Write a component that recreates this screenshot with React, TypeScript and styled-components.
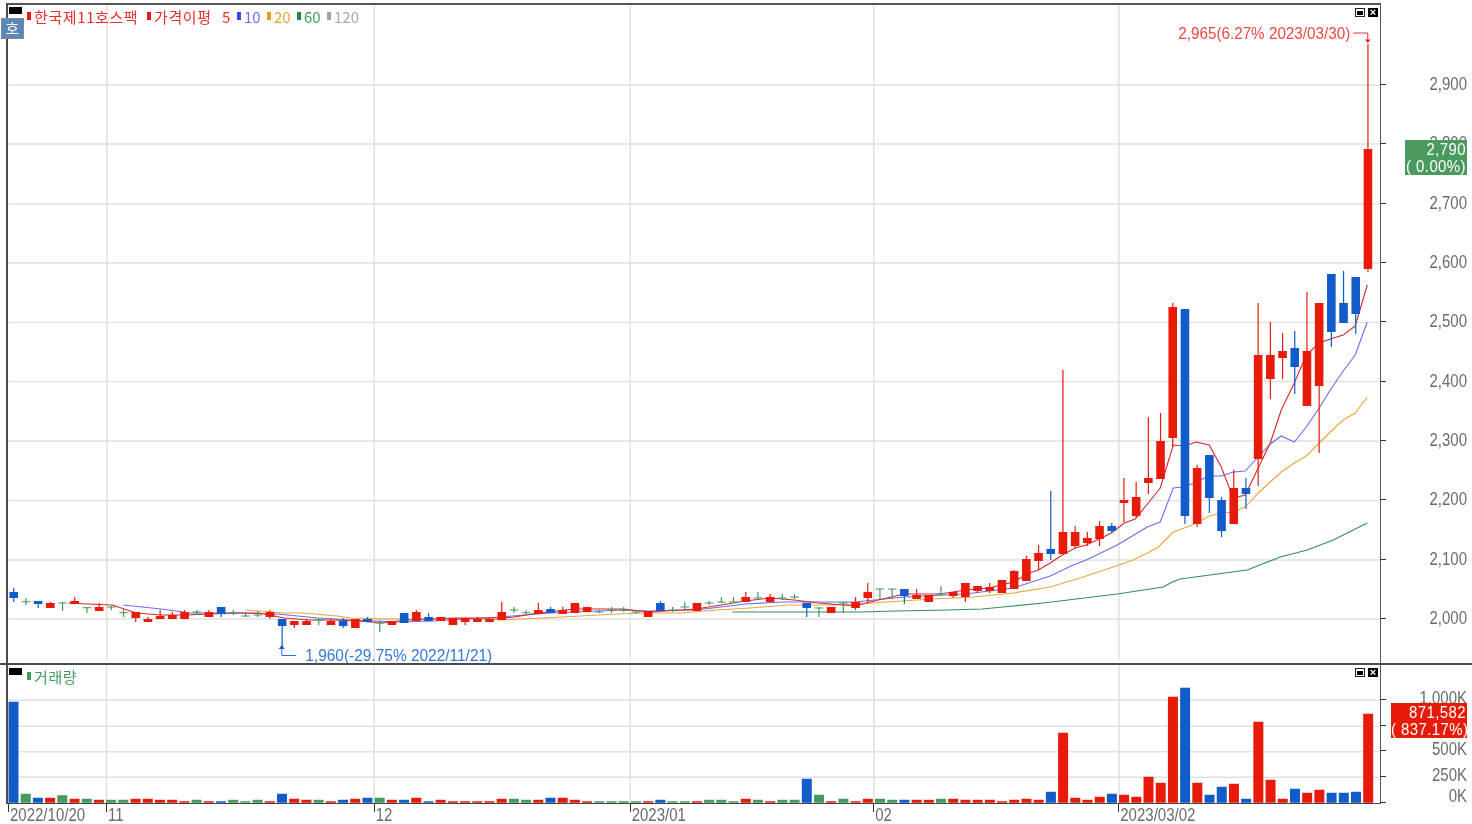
import styled, { createGlobalStyle } from "styled-components";

type Candle = ["r" | "b" | "g", number, number, number, number];
type Bar = ["r" | "b" | "g", number];

const RED = "#e81b0a";
const BLUE = "#115cca";
const GREEN = "#459a5d";
const colors = { r: RED, b: BLUE, g: GREEN };

const X0 = 13.5;
const STEP = 12.2;
const slotX = (i: number) => X0 + STEP * i;

// [colour, wick top, body top, body bottom, wick bottom] in page pixels
const candles: Candle[] = [
    ["b", 588, 592, 598, 602], ["g", 598, 601.7, 601.7, 605], ["b", 601, 601, 604, 608], ["r", 602, 603, 608, 608],
    ["g", 602, 603, 603, 611], ["r", 597, 601, 604, 604], ["g", 607, 607.7, 607.7, 613], ["r", 603, 607, 611, 611],
    ["g", 606, 607, 607, 610], ["g", 609, 612.7, 612.7, 617], ["r", 612, 612, 618, 622], ["r", 617, 619, 622, 622],
    ["r", 610, 616, 619, 619], ["r", 612, 615, 619, 619], ["r", 610, 612, 619, 619], ["g", 610, 612, 612, 615],
    ["r", 610, 612, 617, 617], ["b", 607, 607, 614, 617], ["g", 610, 612.7, 612.7, 615], ["g", 612, 616, 616, 617],
    ["g", 611, 615, 615, 617], ["r", 610, 612, 617, 619], ["b", 619, 619, 626, 646], ["r", 621, 621, 625, 628],
    ["r", 619, 621, 625, 625], ["g", 618, 620, 620, 625], ["r", 619, 621, 625, 625], ["b", 618, 621, 626, 628],
    ["r", 619, 619, 628, 628], ["b", 617, 619, 622, 622], ["g", 620, 623, 623, 632], ["r", 621, 621, 625, 625],
    ["b", 613, 613, 623, 623], ["r", 610, 612, 621, 621], ["b", 613, 617, 621, 621], ["r", 617, 617, 621, 621],
    ["r", 618, 618, 625, 625], ["r", 618, 618, 622, 625], ["r", 617, 619, 622, 622], ["r", 618, 619, 622, 622],
    ["r", 602, 612, 620, 620], ["g", 607, 610, 610, 613], ["g", 610, 612.7, 612.7, 615], ["r", 603, 610, 614, 614],
    ["b", 607, 609, 613, 613], ["r", 607, 610, 614, 614], ["r", 603, 603, 613, 613], ["r", 607, 607, 612, 612],
    ["g", 610, 612, 612, 613], ["g", 607, 610, 610, 613], ["g", 607, 610, 610, 612], ["g", 610, 612, 612, 614],
    ["r", 611, 611, 617, 617], ["b", 601, 603, 611, 611], ["g", 607, 610, 610, 612], ["g", 602, 607, 607, 610],
    ["r", 603, 603, 611, 611], ["g", 601, 603, 603, 605], ["g", 597, 602, 602, 603], ["g", 597, 602, 602, 603],
    ["r", 592, 597, 602, 602], ["g", 592, 598, 598, 600], ["r", 594, 597, 602, 603], ["g", 594, 598, 598, 600],
    ["g", 594, 597, 597, 599], ["b", 603, 603, 608, 617], ["g", 607, 608, 608, 617], ["r", 607, 607, 613, 613],
    ["g", 602, 603, 603, 613], ["r", 597, 602, 608, 610], ["r", 583, 592, 598, 603], ["g", 589, 589, 589, 600],
    ["g", 589, 589, 589, 599], ["b", 589, 589, 596, 604], ["r", 589, 595, 599, 599], ["r", 595, 595, 602, 602],
    ["g", 586, 594, 594, 596], ["r", 592, 592, 596, 598], ["r", 583, 583, 597, 602], ["r", 586, 586, 591, 593],
    ["r", 583, 587, 591, 593], ["r", 580, 580, 593, 593], ["r", 570, 571, 589, 589], ["r", 556, 559, 581, 581],
    ["r", 545, 553, 561, 570], ["b", 491, 549, 554, 560], ["r", 370, 532, 554, 554], ["r", 526, 532, 546, 548],
    ["r", 532, 538, 543, 546], ["r", 521, 526, 539, 546], ["b", 523, 526, 531, 533], ["r", 478, 500, 503, 522],
    ["r", 482, 497, 516, 518], ["r", 417, 478, 483, 494], ["r", 413, 441, 479, 479], ["r", 303, 307, 438, 447],
    ["b", 309, 309, 516, 524], ["r", 465, 468, 524, 527], ["b", 455, 455, 498, 513], ["b", 497, 500, 531, 537],
    ["r", 470, 488, 524, 524], ["b", 478, 488, 494, 509], ["r", 303, 355, 459, 486], ["r", 322, 355, 379, 399],
    ["r", 333, 351, 358, 379], ["b", 331, 348, 367, 394], ["r", 292, 351, 406, 406], ["r", 303, 303, 386, 453],
    ["b", 274, 274, 332, 347], ["b", 271, 303, 323, 323], ["b", 277, 277, 314, 334], ["r", 44, 149, 269, 272],
];

const volumes: Bar[] = [
    ["b", 101], ["g", 9], ["b", 5], ["r", 5], ["g", 7.5], ["r", 4], ["g", 4], ["r", 3], ["g", 3], ["g", 3],
    ["r", 4], ["r", 4], ["r", 3], ["r", 3], ["r", 1.5], ["g", 3], ["r", 1.5], ["b", 1.5], ["g", 3], ["g", 1.5],
    ["g", 3], ["r", 1.5], ["b", 9], ["r", 4], ["r", 3], ["g", 3], ["r", 1.5], ["b", 3], ["r", 4], ["b", 5],
    ["g", 5], ["r", 3], ["b", 3], ["r", 5], ["b", 1.5], ["r", 3], ["r", 1.5], ["r", 1.5], ["r", 1.5], ["r", 1.5],
    ["r", 4], ["g", 4], ["g", 3], ["r", 3], ["b", 5], ["r", 5], ["r", 3], ["r", 1.5], ["g", 1.5], ["g", 1.5],
    ["g", 1.5], ["g", 1.5], ["r", 1.5], ["b", 3], ["g", 1.5], ["g", 1.5], ["r", 1.5], ["g", 3], ["g", 3], ["g", 1.5],
    ["r", 4], ["g", 3], ["r", 1.5], ["g", 3], ["g", 3], ["b", 24], ["g", 8], ["r", 1.5], ["g", 4], ["r", 1.5],
    ["r", 4], ["g", 4], ["g", 3], ["b", 3], ["r", 3], ["r", 3], ["g", 4], ["r", 4], ["r", 3], ["r", 3],
    ["r", 3], ["r", 1.5], ["r", 3], ["r", 4], ["r", 3], ["b", 11], ["r", 70], ["r", 5], ["r", 3], ["r", 6],
    ["b", 9], ["r", 8], ["r", 6], ["r", 26], ["r", 20], ["r", 106], ["b", 115], ["r", 20], ["b", 8], ["b", 16],
    ["r", 19], ["b", 4], ["r", 81], ["r", 23], ["r", 4], ["b", 14], ["r", 10], ["r", 13], ["b", 10], ["b", 10],
    ["b", 11], ["r", 89],
];

const ma5 = "68,603 87,604 112,605 136,613 161,615 185,615 210,614 235,613 259,613 284,618 309,620 333,620 358,621 382,623 406,620 456,618 502,618 514,617 538,613 574,609 623,609 648,612 696,609 721,605 745,601 770,598 794,600 818,603 855,606 878,600 904,594 940,594 965,590 989,588 1013,582 1029,573 1038,570 1050,563 1062,555 1075,548 1086,545 1099,539 1111,533 1124,523 1135,519 1148,503 1160,488 1173,445 1184,446 1196,442 1209,445 1221,467 1233,498 1245,495 1257,470 1270,443 1281,410 1294,383 1306,355 1319,343 1330,339 1343,335 1355,326 1367,285";
const ma10 = "123,605 161,609 190,613 233,613 277,614 318,618 350,620 400,622 433,621 500,617 550,613 574,612 623,610 648,611 696,610 745,604 782,602 855,602 904,597 965,594 1013,588 1050,576 1073,565 1086,560 1117,545 1147,527 1160,522 1173,488 1184,487 1196,482 1209,476 1221,476 1233,472 1245,471 1257,458 1270,444 1281,436 1294,442 1306,427 1319,408 1330,390 1343,371 1355,355 1367,322";
const ma20 = "245,610 284,613 302,613 337,616 350,618 390,619 483,619 500,620 543,618 580,616 617,614 642,613 680,613 717,610 750,608 787,605 833,605 870,603 933,599 973,597 1013,593 1050,587 1080,578 1110,568 1133,560 1157,548 1173,532 1192,525 1196,523 1209,516 1221,513 1233,512 1245,507 1257,494 1270,482 1281,472 1294,463 1306,456 1319,443 1330,432 1343,420 1355,413 1367,397";
const ma60 = "732,612 860,612 897,611 947,610 982,609 1013,606 1043,603 1117,594 1163,587 1172,582 1180,579 1247,570 1280,557 1307,550 1333,540 1353,530 1367,523";

const gridColumns = [106.5, 374, 630, 873.5, 1118.7];
const priceRows = [85, 144, 204, 263, 322.5, 381.5, 441, 500.5, 560, 619];
const volumeRows = [700, 726, 751.5, 777];

const priceLabels = ["2,900", "2,800", "2,700", "2,600", "2,500", "2,400", "2,300", "2,200", "2,100", "2,000"];
const volumeLabels: [string, number][] = [["1,000K", 5], ["750K", 5], ["500K", 5], ["250K", 5], ["0K", 14]];
const dateTicks: [string, number][] = [["2022/10/20", 98], ["11", 267.7], ["12", 256], ["2023/01", 243.6], ["02", 245], ["2023/03/02", 200]];

const GlobalStyle = createGlobalStyle`
    html, body {
        margin: 0;
        background: #fff;
    }
`;

const Page = styled.div`
    width: 1472px;
    height: 824px;
    padding-top: 3px;
    box-sizing: border-box;
    overflow: hidden;
    background: #fff;
    font-family: "Liberation Sans", "Noto Sans CJK KR", sans-serif;
    filter: blur(0.35px);
`;

const Row = styled.div<{ $divided?: boolean; $height: number }>`
    display: flex;
    height: ${({ $height }) => $height}px;
    padding-left: 6px;
    border-top: ${({ $divided }) => ($divided ? "2px solid #4a4a4a" : "none")};
`;

const Plot = styled.div<{ $volume?: boolean }>`
    position: relative;
    flex: none;
    width: 1375px;
    box-sizing: border-box;
    height: 100%;
    border-left: 2px solid #4a4a4a;
    border-right: 1.5px solid #555;
    border-top: ${({ $volume }) => ($volume ? "none" : "2px solid #555")};
    border-bottom: ${({ $volume }) => ($volume ? "1.5px solid #444" : "none")};
`;

const Chart = styled.svg`
    display: block;
    width: 100%;
    height: 100%;
`;

const Axis = styled.div<{ $top: number }>`
    position: relative;
    flex: 1;
    padding-top: ${({ $top }) => $top}px;
    color: #6b6b6b;
    font-size: 15px;
`;

const Tick = styled.div<{ $height: number }>`
    display: flex;
    align-items: center;
    height: ${({ $height }) => $height}px;
    padding-right: 5px;

    &::before {
        content: "";
        width: 5px;
        height: 1px;
        background: #333;
    }
`;

const TickLabel = styled.span<{ $lift?: number }>`
    display: inline-block;
    margin-left: auto;
    margin-bottom: ${({ $lift }) => $lift ?? 2}px;
    transform: scaleY(1.22);
`;

const PriceTag = styled.div<{ $top: number; $left: number; $tone: string }>`
    position: absolute;
    top: ${({ $top }) => $top}px;
    left: ${({ $left }) => $left}px;
    right: 5px;
    height: 35px;
    background: ${({ $tone }) => $tone};
    color: #fff;
    font-size: 15px;
    line-height: 17px;
    text-align: right;
    padding-right: 1px;
    letter-spacing: 0.4px;
    white-space: pre;

    span {
        display: block;
        transform: scaleY(1.1);
    }
`;

const Legend = styled.div`
    position: absolute;
    top: 1px;
    left: 19px;
    display: flex;
    align-items: center;
    height: 20px;
    font-family: "Noto Sans CJK KR", "Liberation Sans", sans-serif;
    font-size: 15px;
    white-space: nowrap;
`;

const Marker = styled.i<{ $tone: string }>`
    flex: none;
    width: 4px;
    height: 8px;
    background: ${({ $tone }) => $tone};
    margin-right: 3px;
`;

const LegendText = styled.span<{ $tone: string; $width: number }>`
    display: inline-block;
    width: ${({ $width }) => $width}px;
    color: ${({ $tone }) => $tone};
    letter-spacing: ${({ $width }) => ($width > 55 ? "0.6px" : "0")};
`;

const Corner = styled.div<{ $top: number }>`
    position: absolute;
    top: ${({ $top }) => $top}px;
    left: 1px;
    width: 13px;
    height: 7px;
    background: #000;
`;

const SymbolBadge = styled.div`
    position: absolute;
    top: 13px;
    left: -7px;
    width: 23px;
    height: 21px;
    box-sizing: border-box;
    border: 1px solid #7c8a9a;
    background: #5b86b8;
    color: #fff;
    font-family: "Noto Sans CJK KR", sans-serif;
    font-size: 15px;
    line-height: 18px;
    text-align: center;
`;

const Controls = styled.div<{ $top: number }>`
    position: absolute;
    top: ${({ $top }) => $top}px;
    right: 2px;
    display: flex;
    gap: 3px;
`;

const MinButton = styled.div`
    width: 10px;
    height: 9px;
    box-sizing: border-box;
    border: 1px solid #222;
    background: #fff;
    padding: 1.5px 1px;

    &::after {
        content: "";
        display: block;
        height: 4px;
        background: #000;
    }
`;

const CloseButton = styled.div`
    width: 10px;
    height: 9px;
    background: #000;
    color: #fff;
    font-size: 11px;
    font-weight: bold;
    line-height: 9px;
    text-align: center;
`;

const XAxis = styled.div`
    display: flex;
    padding-left: 8px;
    height: 20px;
    color: #6b6b6b;
    font-size: 15px;
`;

const DateTick = styled.div<{ $width: number }>`
    position: relative;
    flex: none;
    display: flex;
    align-items: center;
    width: ${({ $width }) => $width}px;
    padding-left: 2px;
    box-sizing: border-box;

    &::before {
        content: "";
        position: absolute;
        top: 0;
        left: 0;
        width: 1px;
        height: 8px;
        background: #333;
    }

    span {
        transform: scaleY(1.22);
    }
`;

const GridLines = ({ rows, top, bottom }: { rows: number[]; top: number; bottom: number }) => (
    <g stroke="#e1e1e1" strokeWidth={1.3}>
        {rows.map((y) => (
            <line key={y} x1={8} x2={1380} y1={y} y2={y} />
        ))}
        {gridColumns.map((x) => (
            <line key={x} x1={x} x2={x} y1={top} y2={bottom} strokeWidth={1.5} />
        ))}
    </g>
);

const CandleMark = ({ data, x }: { data: Candle; x: number }) => {
    const [tone, high, open, close, low] = data;
    const color = colors[tone];
    return (
        <g>
            <line x1={x} x2={x} y1={high} y2={low} stroke={color} strokeWidth={1.2} />
            {open === close ? (
                <line x1={x - 4.3} x2={x + 4.3} y1={open} y2={open} stroke={color} strokeWidth={1} />
            ) : (
                <rect x={x - 4.3} y={open} width={8.6} height={close - open} fill={color} />
            )}
        </g>
    );
};

const MaLine = ({ points, color }: { points: string; color: string }) => (
    <polyline points={points} fill="none" stroke={color} strokeWidth={1.1} />
);

const App = () => (
    <Page>
        <GlobalStyle />
        <Row $height={660}>
            <Plot>
                <Chart viewBox="8 5 1371.5 658">
                    <GridLines rows={priceRows} top={5} bottom={660} />
                    <MaLine points={ma60} color="#2f9153" />
                    <MaLine points={ma20} color="#eaa63a" />
                    <MaLine points={ma10} color="#6a6cf5" />
                    <MaLine points={ma5} color="#d8262a" />
                    {candles.map((c, i) => (
                        <CandleMark key={i} data={c} x={slotX(i)} />
                    ))}
                    <path d="M1353 33H1367.5V40" fill="none" stroke="#ec3a30" strokeWidth={1} />
                    <path d="M1364.5 39.5h6l-3 3.5z" fill="#ec2a20" />
                    <text x={1178} y={38.5} fontSize={16} fill="#ec4a40" fontFamily="Liberation Sans" textLength={172} lengthAdjust="spacingAndGlyphs">
                        2,965(6.27% 2023/03/30)
                    </text>
                    <path d="M281.5 648V655.5H296" fill="none" stroke="#2f71dc" strokeWidth={1} />
                    <path d="M281.5 645l3 4h-6z" fill={BLUE} />
                    <text x={305} y={660.5} fontSize={16} fill="#3478dc" fontFamily="Liberation Sans" textLength={187} lengthAdjust="spacingAndGlyphs">
                        1,960(-29.75% 2022/11/21)
                    </text>
                </Chart>
                <Corner $top={2} />
                <SymbolBadge>호</SymbolBadge>
                <Legend>
                    <Marker $tone={RED} />
                    <LegendText $tone="#e8302a" $width={113}>한국제11호스팩</LegendText>
                    <Marker $tone={RED} />
                    <LegendText $tone="#e8302a" $width={68}>가격이평</LegendText>
                    <LegendText $tone="#e8302a" $width={15}>5</LegendText>
                    <Marker $tone="#3f46f0" />
                    <LegendText $tone="#6a6cf5" $width={23}>10</LegendText>
                    <Marker $tone="#e59a1f" />
                    <LegendText $tone="#eaa63a" $width={23}>20</LegendText>
                    <Marker $tone="#1f8a45" />
                    <LegendText $tone={GREEN} $width={23}>60</LegendText>
                    <Marker $tone="#a0a0a0" />
                    <LegendText $tone="#a8a8a8" $width={30}>120</LegendText>
                </Legend>
                <Controls $top={3}>
                    <MinButton />
                    <CloseButton>×</CloseButton>
                </Controls>
            </Plot>
            <Axis $top={51.8}>
                {priceLabels.map((label) => (
                    <Tick key={label} $height={59.33}>
                        <TickLabel>{label}</TickLabel>
                    </Tick>
                ))}
                <PriceTag $top={137} $left={24} $tone="#4a9a60">
                    <span>2,790</span>
                    <span>( 0.00%)</span>
                </PriceTag>
            </Axis>
        </Row>
        <Row $divided $height={139}>
            <Plot $volume>
                <Chart viewBox="8 665 1371.5 137.5">
                    <GridLines rows={volumeRows} top={665} bottom={803} />
                    {volumes.map(([tone, height], i) => (
                        <rect key={i} x={slotX(i) - 5} y={802.5 - height} width={10} height={height} fill={colors[tone]} />
                    ))}
                </Chart>
                <Corner $top={3} />
                <Legend>
                    <Marker $tone={GREEN} />
                    <LegendText $tone={GREEN} $width={60}>거래량</LegendText>
                </Legend>
                <Controls $top={3}>
                    <MinButton />
                    <CloseButton>×</CloseButton>
                </Controls>
            </Plot>
            <Axis $top={22}>
                {volumeLabels.map(([label, lift]) => (
                    <Tick key={label} $height={25.6}>
                        <TickLabel $lift={lift}>{label}</TickLabel>
                    </Tick>
                ))}
                <PriceTag $top={38} $left={10} $tone={RED}>
                    <span>871,582</span>
                    <span>( 837.17%)</span>
                </PriceTag>
            </Axis>
        </Row>
        <XAxis>
            {dateTicks.map(([label, width]) => (
                <DateTick key={label} $width={width}>
                    <span>{label}</span>
                </DateTick>
            ))}
        </XAxis>
    </Page>
);

export default App;
